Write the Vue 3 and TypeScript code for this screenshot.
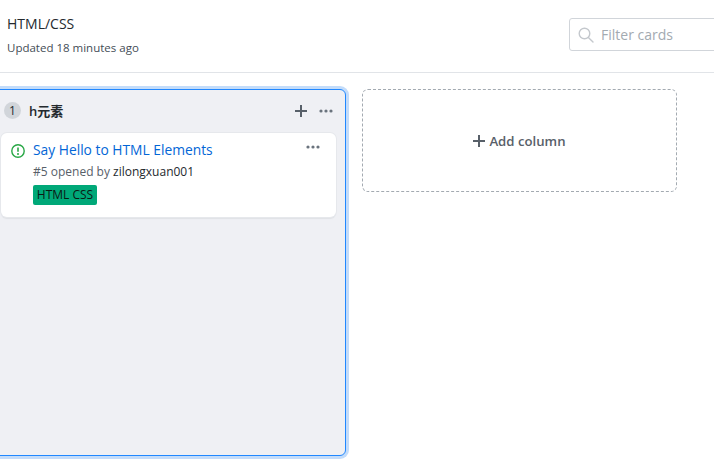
<script setup lang="ts">
const cardTitle = 'Say Hello to HTML Elements'
</script>

<template>
  <div class="page">
    <header class="head">
      <div class="info">
        <div class="name">HTML/CSS</div>
        <div class="updated">Updated 18 minutes ago</div>
      </div>
      <div class="filter">
        <svg class="search" width="16" height="16" viewBox="0 0 16 16" fill="none" stroke="#c4c8cd" stroke-width="1.4">
          <circle cx="6.5" cy="6.5" r="5.3" />
          <path d="M10.4 10.4 15 15" stroke-linecap="round" />
        </svg>
        <span>Filter cards</span>
      </div>
    </header>
    <main class="board">
      <section class="column">
        <div class="col-head">
          <span class="count">1</span>
          <span class="col-name">h元素</span>
          <svg class="plus" width="14" height="14" viewBox="0 0 14 14"><path d="M7 1v12M1 7h12" stroke="#586069" stroke-width="2" /></svg>
          <svg class="dots" width="14" height="4" viewBox="0 0 14 4" fill="#6a737d"><circle cx="2" cy="2" r="1.6" /><circle cx="7" cy="2" r="1.6" /><circle cx="12" cy="2" r="1.6" /></svg>
        </div>
        <article class="card">
          <svg class="issue" width="14" height="14" viewBox="0 0 14 14" fill="none">
            <circle cx="7" cy="7" r="6.2" stroke="#28a745" stroke-width="1.4" />
            <path d="M7 3.5v4.2" stroke="#28a745" stroke-width="1.6" />
            <circle cx="7" cy="10" r="1" fill="#28a745" />
          </svg>
          <div class="body">
            <a class="title">{{ cardTitle }}</a>
            <div class="meta">#5 opened by <span class="author">zilongxuan001</span></div>
            <span class="label">HTML CSS</span>
          </div>
          <svg class="card-dots" width="14" height="4" viewBox="0 0 14 4" fill="#6a737d"><circle cx="2" cy="2" r="1.6" /><circle cx="7" cy="2" r="1.6" /><circle cx="12" cy="2" r="1.6" /></svg>
        </article>
      </section>
      <div class="add">
        <svg width="12" height="12" viewBox="0 0 12 12"><path d="M6 0v12M0 6h12" stroke="#586069" stroke-width="2" /></svg>
        <span>Add column</span>
      </div>
    </main>
  </div>
</template>

<style>
html, body { margin: 0; overflow: hidden; background: #fff; }
</style>

<style scoped>
.page {
  width: 714px;
  height: 470px;
  overflow: hidden;
  font-family: "Open Sans", "Noto Sans CJK SC", sans-serif;
  color: #24292e;
  background: #fff;
}
.head {
  height: 73px;
  box-sizing: border-box;
  border-bottom: 1px solid #e1e4e8;
  display: flex;
  justify-content: space-between;
  padding: 14px 0 0 7px;
}
.name { font-size: 14px; line-height: 19px; }
.updated { font-size: 11.5px; line-height: 16px; margin-top: 7px; color: #444d56; }
.filter {
  width: 160px;
  height: 33px;
  margin: 4px -15px 0 0;
  box-sizing: border-box;
  border: 1px solid #d1d5da;
  border-radius: 3px;
  display: flex;
  align-items: center;
  gap: 7px;
  padding-left: 8px;
  font-size: 14px;
  color: #a3aab1;
}
.board {
  display: flex;
  align-items: flex-start;
  gap: 16px;
  padding: 16px 0 0;
  margin-left: -9px;
}
.column {
  width: 355px;
  height: 367px;
  box-sizing: border-box;
  flex: none;
  background: #eff0f4;
  border: 1px solid #2188ff;
  border-radius: 6px;
  box-shadow: 0 0 0 3px #c3dcfa;
  padding: 0 9px;
}
.col-head {
  height: 43px;
  box-sizing: border-box;
  padding: 0 0 2px 3px;
  display: flex;
  align-items: center;
}
.count {
  width: 17px;
  height: 17px;
  border-radius: 50%;
  background: #d1d5da;
  font-size: 12px;
  line-height: 17px;
  text-align: center;
  flex: none;
  margin-right: 8px;
}
.col-name { font-size: 13px; font-weight: 600; flex: 1; }
.plus { margin-right: 11px; }
.dots { margin-right: 3px; }
.card {
  position: relative;
  height: 84px;
  box-sizing: border-box;
  background: #fff;
  border-radius: 6px;
  box-shadow: 0 0 0 1px #e6e8ec, 0 2px 1px #dfe1e6;
  display: flex;
  padding: 9px 0 0 10px;
  gap: 8px;
}
.issue { margin-top: 2px; flex: none; }
.title { display: block; font-size: 13.8px; font-weight: 500; line-height: 16px; color: #0366d6; }
.meta { font-size: 12px; line-height: 17px; margin-top: 5px; color: #586069; }
.author { color: #24292e; }
.label {
  display: inline-block;
  margin-top: 5px;
  width: 64px;
  height: 20px;
  box-sizing: border-box;
  border-radius: 2px;
  background: #00a878;
  color: #0b1a14;
  font-size: 12px;
  line-height: 20px;
  text-align: center;
  font-weight: 500;
}
.card-dots { position: absolute; top: 12px; right: 16px; }
.add {
  width: 315px;
  height: 103px;
  box-sizing: border-box;
  flex: none;
  border: 1px dashed #a3aab1;
  border-radius: 6px;
  display: flex;
  align-items: center;
  justify-content: center;
  gap: 4px;
  font-size: 13.2px;
  font-weight: 600;
  color: #586069;
}
</style>
